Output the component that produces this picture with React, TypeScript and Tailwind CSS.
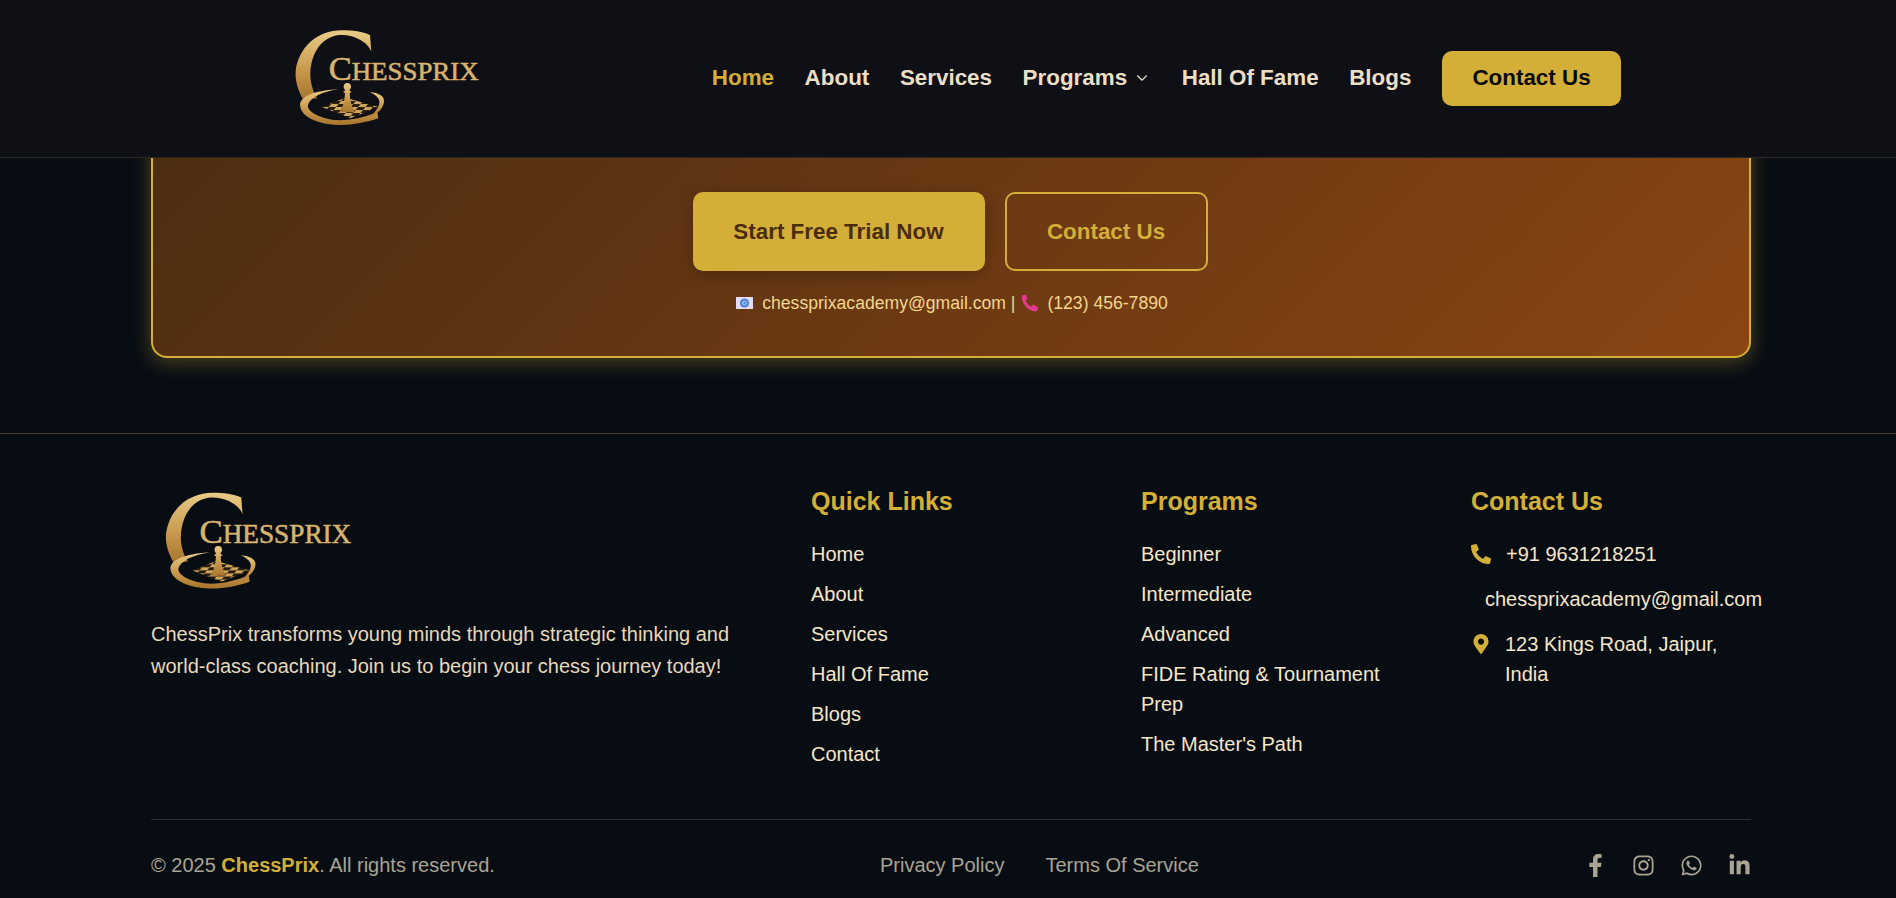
import { ChevronDown } from "lucide-react";
import { FaPhoneAlt, FaMapMarkerAlt, FaFacebookF, FaInstagram, FaWhatsapp, FaLinkedinIn } from "react-icons/fa";

function Logo({ id, className }: { id: string; className: string }) {
  return (
    <svg viewBox="0 0 720 390" className={className}>
      <defs>
        <linearGradient id={`${id}g`} x1="0" y1="0" x2="0" y2="1">
          <stop offset="0" stopColor="#e9cb86" />
          <stop offset="0.55" stopColor="#c99b50" />
          <stop offset="1" stopColor="#a8742c" />
        </linearGradient>
        <pattern id={`${id}p`} width="44" height="18" patternUnits="userSpaceOnUse" patternTransform="skewX(-40)">
          <rect width="44" height="18" fill="#2a1e0f" />
          <rect width="22" height="9" fill="#cfa45c" />
          <rect x="22" y="9" width="22" height="9" fill="#cfa45c" />
        </pattern>
        <clipPath id={`${id}c`}>
          <path d="M156 288 L226 260 L326 288 L240 322 Z" />
        </clipPath>
      </defs>
      <path
        d="M304 122 C294 94 254 70 208 72 C152 78 122 130 121 190 C121 218 130 245 142 262 L100 266 C84 238 75 210 77 180 C86 110 140 58 216 58 C246 58 278 62 300 72 Z"
        fill={`url(#${id}g)`}
      />
      <path d="M150 108 C130 140 124 190 136 240" fill="none" stroke="#0b0e14" strokeWidth="4" />
      <path
        d="M206 234 C150 238 92 250 90 282 C92 320 150 342 215 342 C250 342 290 334 325 322 L322 302 C290 318 240 330 195 327 C150 322 110 302 114 282 C120 258 160 242 206 234 Z"
        fill={`url(#${id}g)`}
      />
      <path d="M300 243 C325 246 344 254 342 272 C340 292 322 308 300 318 C318 300 330 285 328 270 C326 258 312 250 300 243 Z" fill={`url(#${id}g)`} />
      <rect x="150" y="255" width="180" height="70" fill={`url(#${id}p)`} clipPath={`url(#${id}c)`} />
      <path
        d="M232 216 C240 216 244 222 243 229 C242 234 239 236 238 238 L245 243 L239 246 C240 265 243 282 250 294 L254 304 L210 304 L214 294 C221 282 224 265 225 246 L219 243 L226 238 C225 236 222 234 221 229 C220 222 224 216 232 216 Z"
        fill={`url(#${id}g)`}
      />
      <text
        x="176"
        y="207"
        fill="#d9b36c"
        stroke="#d9b36c"
        strokeWidth="1.6"
        fontFamily="'Liberation Serif', serif"
        textLength="450"
        lengthAdjust="spacingAndGlyphs"
      >
        <tspan fontSize="100">C</tspan>
        <tspan fontSize="78">HESSPRIX</tspan>
      </text>
    </svg>
  );
}

function EnvelopeEmoji() {
  return (
    <svg viewBox="0 0 17 12" className="w-[17px] h-[12px] shrink-0">
      <rect width="17" height="12" fill="#e4dcf5" />
      <circle cx="8.5" cy="6" r="4.6" fill="#4f86d9" />
      <circle cx="8.5" cy="6" r="1.8" fill="none" stroke="#c5d8f5" strokeWidth="0.9" />
    </svg>
  );
}

function PhoneEmoji() {
  return (
    <svg viewBox="0 0 18 18" className="w-[18px] h-[18px] shrink-0">
      <path d="M1 1.5 L4.5 0.5 L6.5 4.5 L4.5 6.5 C5.5 9 7.5 11.5 10 12.5 L12.5 10.5 L17 13.5 L16.5 16.5 C15 18 11 17.5 7.5 15 C3.5 12 0 6.5 1 1.5 Z" fill="#e23a8c" />
    </svg>
  );
}

const navItems = ["About", "Services"];
const quick = ["Home", "About", "Services", "Hall Of Fame", "Blogs", "Contact"];
const programs = ["Beginner", "Intermediate", "Advanced", "FIDE Rating & Tournament Prep", "The Master's Path"];

export default function App() {
  return (
    <div className="h-[898px] overflow-hidden bg-[#080d14] font-['Liberation_Sans',Arial,sans-serif]">
      <header className="relative z-10 h-[158px] bg-[#0e1016] border-b border-[#2a2a22] flex items-center pl-[270px] pr-[275px] justify-between">
        <Logo id="h" className="w-[240px] h-[130px] -mt-[6px]" />
        <nav className="flex items-center gap-[30.6px] text-[22.4px] font-bold text-[#ecdfc6] -mt-[1px]">
          <a className="text-[#d4af37]">Home</a>
          {navItems.map((n) => (
            <a key={n}>{n}</a>
          ))}
          <a className="flex items-center gap-[6px]">
            Programs <ChevronDown className="w-[18px] h-[18px]" strokeWidth={1.5} />
          </a>
          <a>Hall Of Fame</a>
          <a>Blogs</a>
          <a className="h-[55px] w-[179px] flex items-center justify-center rounded-[10px] bg-[#d4af37] text-[#0a0a0a]">Contact Us</a>
        </nav>
      </header>

      <section className="pl-[151px] pr-[145px] pb-[75px]">
        <div className="-mt-[100px] pt-[132px] h-[300px] rounded-[16px] border-2 border-[#d4af37] bg-linear-135 from-[#4a2c11] to-[#8b4513] shadow-[0_4px_20px_rgba(212,175,55,0.35)] flex flex-col items-center">
          <div className="flex gap-[20px] justify-center pr-[2px]">
            <a className="w-[292px] h-[79px] flex items-center justify-center rounded-[10px] bg-[#d4af37] text-[#4a2c0f] text-[22.4px] font-bold shadow-[0_4px_15px_rgba(0,0,0,0.25)]">
              Start Free Trial Now
            </a>
            <a className="w-[203px] h-[79px] flex items-center justify-center rounded-[10px] border-2 border-[#d4af37] text-[#d4af37] text-[22.4px] font-bold">
              Contact Us
            </a>
          </div>
          <p className="mt-[20px] pl-[2px] flex items-center text-[17.6px] leading-[24px] text-[#f4d68c]">
            <EnvelopeEmoji />
            <span className="ml-[9px]">chessprixacademy@gmail.com |</span>
            <span className="ml-[6px]"><PhoneEmoji /></span>
            <span className="ml-[8px]">(123) 456-7890</span>
          </p>
        </div>
      </section>

      <footer className="border-t border-[#4a3f1f] pl-[151px] pr-[145px] pt-[52px]">
        <div className="grid grid-cols-[610px_280px_280px_280px] gap-[50px] h-[334px] border-b border-[#2c2c28]">
          <div>
            <Logo id="f" className="w-[243px] h-[132px] -ml-[11px] -mt-[13px]" />
            <p className="mt-[13px] text-[20px] leading-[32px] text-[#e6d8bb]">
              ChessPrix transforms young minds through strategic thinking and world-class coaching. Join us to begin your chess journey today!
            </p>
          </div>
          <div>
            <h3 className="text-[25px] leading-[30px] font-bold text-[#d4af37] mb-[23px]">Quick Links</h3>
            <ul className="text-[20px] leading-[30px] text-[#f5e6c8]">
              {quick.map((q) => (
                <li key={q} className="mb-[10px]">{q}</li>
              ))}
            </ul>
          </div>
          <div>
            <h3 className="text-[25px] leading-[30px] font-bold text-[#d4af37] mb-[23px]">Programs</h3>
            <ul className="text-[20px] leading-[30px] text-[#f5e6c8]">
              {programs.map((q) => (
                <li key={q} className="mb-[10px]">{q}</li>
              ))}
            </ul>
          </div>
          <div>
            <h3 className="text-[25px] leading-[30px] font-bold text-[#d4af37] mb-[23px]">Contact Us</h3>
            <div className="text-[20px] leading-[30px] text-[#f5e6c8]">
              <div className="flex items-center gap-[15px]">
                <FaPhoneAlt className="w-[20px] h-[20px] text-[#d4af37]" />
                <span>+91 9631218251</span>
              </div>
              <div className="ml-[14px] mt-[15px] whitespace-nowrap">chessprixacademy@gmail.com</div>
              <div className="flex items-start mt-[15px]">
                <FaMapMarkerAlt className="w-[20px] h-[20px] mt-[5px] text-[#d4af37] shrink-0 mr-[14px]" />
                <span>123 Kings Road, Jaipur, India</span>
              </div>
            </div>
          </div>
        </div>
        <div className="flex items-center justify-between pt-[31px] text-[20px] leading-[28px] text-[#a9a392]">
          <p>
            © 2025 <span className="font-bold text-[#d4af37]">ChessPrix</span>. All rights reserved.
          </p>
          <div className="flex gap-[41px]">
            <a>Privacy Policy</a>
            <a>Terms Of Service</a>
          </div>
          <div className="flex items-center gap-[25px] text-[23px]">
            <FaFacebookF />
            <FaInstagram />
            <FaWhatsapp />
            <FaLinkedinIn />
          </div>
        </div>
      </footer>
    </div>
  );
}
